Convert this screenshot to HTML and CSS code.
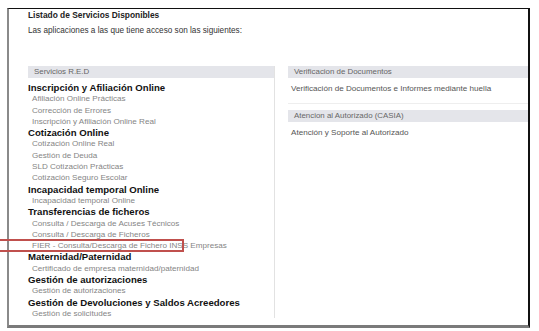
FILE: index.html
```html
<!DOCTYPE html>
<html lang="es">
<head>
    <meta charset="UTF-8">
    <meta name="viewport" content="width=device-width, initial-scale=1.0">
    <title>Listado de Servicios Disponibles</title>
    <link rel="stylesheet" href="styles.css">
</head>
<body>
    <div class="frame">
        <h1 class="title">Listado de Servicios Disponibles</h1>
        <p class="intro">Las aplicaciones a las que tiene acceso son las siguientes:</p>

        <div class="columns">
            <section class="col col-left">
                <div class="bar">Servicios R.E.D</div>
                <ul class="services">
                    <li class="group">Inscripción y Afiliación Online</li>
                    <li class="item">Afiliación Online Prácticas</li>
                    <li class="item">Corrección de Errores</li>
                    <li class="item">Inscripción y Afiliación Online Real</li>
                    <li class="group">Cotización Online</li>
                    <li class="item">Cotización Online Real</li>
                    <li class="item">Gestión de Deuda</li>
                    <li class="item">SLD Cotización Prácticas</li>
                    <li class="item">Cotización Seguro Escolar</li>
                    <li class="group">Incapacidad temporal Online</li>
                    <li class="item">Incapacidad temporal Online</li>
                    <li class="group">Transferencias de ficheros</li>
                    <li class="item">Consulta / Descarga de Acuses Técnicos</li>
                    <li class="item">Consulta / Descarga de Ficheros</li>
                    <li class="item marked">FIER - Consulta/Descarga de Fichero INSS Empresas</li>
                    <li class="group">Maternidad/Paternidad</li>
                    <li class="item">Certificado de empresa maternidad/paternidad</li>
                    <li class="group">Gestión de autorizaciones</li>
                    <li class="item">Gestión de autorizaciones</li>
                    <li class="group">Gestión de Devoluciones y Saldos Acreedores</li>
                    <li class="item">Gestión de solicitudes</li>
                </ul>
            </section>

            <section class="col col-right">
                <div class="bar">Verificacion de Documentos</div>
                <p class="link first">Verificación de Documentos e Informes mediante huella</p>
                <div class="bar">Atencion al Autorizado (CASIA)</div>
                <p class="link">Atención y Soporte al Autorizado</p>
            </section>
        </div>
    </div>
</body>
</html>
```

FILE: styles.css
```css
body {
    margin: 0;
    background: #fff;
    font-family: "Liberation Sans", Arial, sans-serif;
}
.frame {
    box-sizing: border-box;
    width: 523px;
    height: 320px;
    margin: 8px 0 0 7px;
    padding: 1px 0 0 19px;
    border-top: 1px solid #111;
    border-right: 2px solid #111;
    border-bottom: 3px solid #7a7a7a;
    border-left: 2px solid #8a8a8a;
}
.title {
    margin: 0;
    font-size: 8.4px;
    line-height: 10px;
    font-weight: bold;
    color: #222;
}
.intro {
    margin: 6px 0 0;
    font-size: 8.2px;
    line-height: 10px;
    color: #333;
}
.columns {
    display: grid;
    grid-template-columns: 247px 1fr;
    column-gap: 13px;
    margin-top: 30px;
}
.col-left {
    border-right: 1px solid #e2e2e2;
    height: 252px;
}
.bar {
    height: 12px;
    padding-left: 6px;
    background: #e4e5ea;
    font-size: 7.9px;
    line-height: 12px;
    color: #666;
}
.services {
    list-style: none;
    margin: 4px 0 0;
    padding: 0;
}
.services li {
    height: 11.3px;
    line-height: 11.3px;
    white-space: nowrap;
}
.group {
    font-size: 9.6px;
    font-weight: bold;
    color: #111;
}
.item {
    padding-left: 4px;
    font-size: 8.1px;
    color: #858585;
}
.marked {
    position: relative;
}
.marked::after {
    content: "";
    position: absolute;
    left: -31px;
    top: -1px;
    width: 183px;
    height: 9px;
    border: 2px solid #c0504d;
}
.link {
    margin: 5px 0 0;
    padding-left: 3px;
    font-size: 8.1px;
    line-height: 12px;
    color: #555;
}
.link.first {
    padding-bottom: 8px;
    margin-bottom: 6px;
    border-bottom: 1px solid #eeeeee;
}
```
